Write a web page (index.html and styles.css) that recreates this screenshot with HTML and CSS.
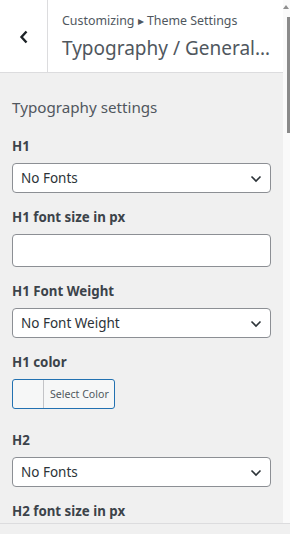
FILE: index.html
```html
<!DOCTYPE html>
<html lang="en">
<head>
    <meta charset="UTF-8">
    <meta name="viewport" content="width=device-width, initial-scale=1.0">
    <title>Customizing Typography</title>
    <link rel="stylesheet" href="styles.css">
</head>
<body>
    <div class="frame">
        <div class="pane">
            <div class="header">
                <button class="back" aria-label="Back">
                    <svg width="10" height="14" viewBox="0 0 10 14"><path d="M7.5 1.5 L2.5 7 L7.5 12.5" fill="none" stroke="#1d2327" stroke-width="2.4"/></svg>
                </button>
                <div class="title">
                    <span class="crumb">Customizing &#9656; Theme Settings</span>
                    <h2>Typography / General…</h2>
                </div>
            </div>

            <div class="section">
                <h3 class="section-title">Typography settings</h3>

                <div class="control">
                    <label class="control-title" for="h1Font">H1</label>
                    <div class="select-wrap">
                        <select id="h1Font"><option>No Fonts</option></select>
                        <svg class="chevron" width="12" height="8" viewBox="0 0 12 8"><path d="M1.5 1.5 L6 6 L10.5 1.5" fill="none" stroke="#2c3338" stroke-width="1.6"/></svg>
                    </div>
                </div>

                <div class="control">
                    <label class="control-title" for="h1Size">H1 font size in px</label>
                    <input type="text" id="h1Size">
                </div>

                <div class="control">
                    <label class="control-title" for="h1Weight">H1 Font Weight</label>
                    <div class="select-wrap">
                        <select id="h1Weight"><option>No Font Weight</option></select>
                        <svg class="chevron" width="12" height="8" viewBox="0 0 12 8"><path d="M1.5 1.5 L6 6 L10.5 1.5" fill="none" stroke="#2c3338" stroke-width="1.6"/></svg>
                    </div>
                </div>

                <div class="control color-control">
                    <span class="control-title">H1 color</span>
                    <button class="color-btn">
                        <span class="swatch"></span>
                        <span class="color-text">Select Color</span>
                    </button>
                </div>

                <div class="control">
                    <label class="control-title" for="h2Font">H2</label>
                    <div class="select-wrap">
                        <select id="h2Font"><option>No Fonts</option></select>
                        <svg class="chevron" width="12" height="8" viewBox="0 0 12 8"><path d="M1.5 1.5 L6 6 L10.5 1.5" fill="none" stroke="#2c3338" stroke-width="1.6"/></svg>
                    </div>
                </div>

                <div class="control">
                    <label class="control-title" for="h2Size">H2 font size in px</label>
                    <input type="text" id="h2Size">
                </div>
            </div>
        </div>

        <div class="scrollbar">
            <span class="arrow-up"></span>
            <span class="thumb"></span>
        </div>
    </div>
    <div class="footer"></div>
</body>
</html>
```

FILE: styles.css
```css
body {
    margin: 0;
    height: 534px;
    overflow: hidden;
    display: flex;
    flex-direction: column;
    font-family: "Noto Sans", "Open Sans", sans-serif;
    color: #50575e;
    background: #f0f0f0;
}
.frame {
    display: flex;
    height: 523px;
    overflow: hidden;
}
.pane {
    width: 283px;
    background: #f0f0f0;
}
.header {
    display: flex;
    height: 72px;
    background: #fff;
    border-bottom: 1px solid #dcdcde;
}
.back {
    width: 48px;
    flex: none;
    border: 0;
    border-right: 1px solid #dcdcde;
    background: #fff;
    padding: 0;
    display: flex;
    align-items: center;
    justify-content: center;
}
.back svg {
    margin-top: 2px;
}
.title {
    padding: 11px 0 0 14px;
    min-width: 0;
}
.crumb {
    display: block;
    font-size: 12.4px;
    line-height: 20px;
    white-space: nowrap;
}
.title h2 {
    margin: 3px 0 0;
    font-size: 19px;
    font-weight: 400;
    line-height: 28px;
    white-space: nowrap;
}
.section {
    padding: 22px 12px 0;
}
.section-title {
    margin: 0 0 15px;
    font-size: 15.2px;
    font-weight: 400;
    line-height: 24px;
}
.control {
    margin-bottom: 12px;
}
.control-title {
    display: block;
    font-size: 13.3px;
    font-weight: 700;
    line-height: 24px;
    color: #3c434a;
    margin-bottom: 5px;
}
.select-wrap {
    position: relative;
}
select {
    appearance: none;
    display: block;
    width: 100%;
    height: 30px;
    margin: 0;
    padding: 0 24px 0 8px;
    font-family: inherit;
    font-size: 13.5px;
    color: #2c3338;
    background: #fff;
    border: 1px solid #8c8f94;
    border-radius: 4px;
}
.chevron {
    position: absolute;
    right: 9px;
    top: 12px;
    pointer-events: none;
}
input {
    display: block;
    box-sizing: border-box;
    width: 100%;
    height: 33px;
    margin: 0;
    font-family: inherit;
    font-size: 14px;
    background: #fff;
    border: 1px solid #8c8f94;
    border-radius: 4px;
}
.color-control {
    margin-bottom: 19px;
}
.color-btn {
    display: flex;
    height: 30px;
    padding: 0;
    border: 1px solid #2271b1;
    border-radius: 3px;
    background: #f6f7f7;
    font-family: inherit;
}
.swatch {
    width: 30px;
    border-right: 1px solid #c3c4c7;
}
.color-text {
    padding: 0 5px 0 6px;
    font-size: 10.6px;
    line-height: 28px;
    color: #50575e;
}
.scrollbar {
    width: 7px;
    background: #fafafa;
    display: flex;
    flex-direction: column;
    align-items: flex-end;
}
.arrow-up {
    margin: 5px 1px 0 0;
    width: 0;
    height: 0;
    border-left: 3px solid transparent;
    border-right: 3px solid transparent;
    border-bottom: 4px solid #8f8f8f;
}
.thumb {
    margin-top: 8px;
    width: 3px;
    height: 116px;
    background: #8a8a8a;
}
.footer {
    flex: 1;
    border-top: 1px solid #dcdcde;
    background: #f0f0f0;
}
```
